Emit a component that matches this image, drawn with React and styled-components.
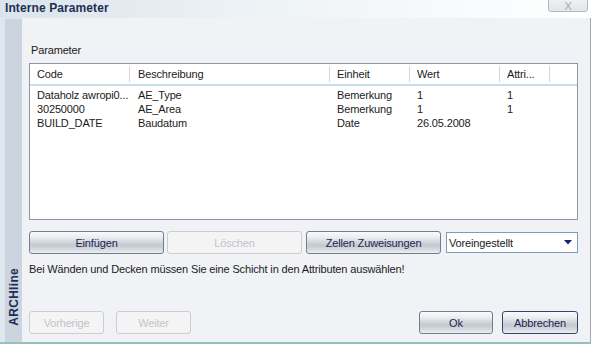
import styled, { createGlobalStyle } from 'styled-components';

const GlobalStyle = createGlobalStyle`
    html, body {
        margin: 0;
        padding: 0;
        background: #ffffff;
    }
    body {
        font-family: "Liberation Sans", Arial, sans-serif;
        font-size: 11px;
        letter-spacing: -0.15px;
        color: #1b1b1b;
    }
`

const Window = styled.div`
    width: 591px;
    height: 344px;
    display: flex;
    flex-direction: column;
    border-bottom: 2px solid #93c3b6;
    box-sizing: border-box;
`

const TitleBar = styled.div`
    height: 18px;
    flex-shrink: 0;
    display: flex;
    justify-content: space-between;
    align-items: flex-start;
    background: linear-gradient(to right, #dae4eb 0%, #eef3f6 45%, #ffffff 100%);
    padding-left: 5px;
`

const Title = styled.div`
    font-weight: bold;
    font-size: 12px;
    line-height: 17px;
    color: #1e2f55;
    letter-spacing: 0.1px;
`

const CloseButton = styled.div`
    width: 38px;
    height: 18px;
    margin-top: -8px;
    margin-right: 3px;
    border: 1px solid #b3b9c2;
    border-radius: 3px;
    background: linear-gradient(to bottom, #f4f5f7, #e3e6ea);
    color: #a4aab2;
    font-size: 11px;
    line-height: 26px;
    text-align: center;
    overflow: hidden;
`

const Body = styled.div`
    flex: 1;
    display: flex;
    background: #dde7ed;
    border-right: 1px solid #a4a9b0;
`

const Strip = styled.div`
    width: 17px;
    flex-shrink: 0;
    margin-left: 5px;
    margin-top: 1px;
    background: #ccd4df;
    display: flex;
    flex-direction: column;
    justify-content: flex-end;
    align-items: center;
    padding-bottom: 16px;
    box-sizing: border-box;
`

const BrandText = styled.div`
    writing-mode: vertical-rl;
    transform: rotate(180deg);
    font-weight: bold;
    font-size: 12px;
    color: #1e2f55;
    letter-spacing: 0.3px;
`

const Content = styled.div`
    flex: 1;
    min-width: 0;
    background: #f1f2f6;
    padding: 25px 12px 0 7px;
    display: flex;
    flex-direction: column;
`

const Label = styled.div`
    line-height: 14px;
    padding-left: 2px;
    margin-bottom: 6px;
`

const ListView = styled.div`
    height: 157px;
    box-sizing: border-box;
    border: 1px solid #8c96a4;
    background: #ffffff;
`

const HeaderRow = styled.div`
    display: grid;
    grid-template-columns: 100px 200px 80px 90px 50px 1fr;
    height: 20px;
    border-bottom: 2px solid #c9dcea;
`

const HeaderCell = styled.div`
    padding-left: ${p => p.$pad || 7}px;
    border-right: ${p => p.$last ? 'none' : '1px solid #d6d6d6'};
    margin: 2px 0;
    line-height: 16px;
    white-space: nowrap;
    overflow: hidden;
`

const Rows = styled.div`
    padding-top: 2px;
`

const Row = styled.div`
    display: grid;
    grid-template-columns: 100px 200px 80px 90px 50px 1fr;
    height: 14px;
    line-height: 14px;
`

const Cell = styled.div`
    padding-left: ${p => p.$pad || 7}px;
    white-space: nowrap;
    overflow: hidden;
`

const ButtonRow = styled.div`
    display: flex;
    align-items: center;
    margin-top: 11px;
    gap: 3px;
`

const Button = styled.div`
    width: ${p => p.$w}px;
    height: 23px;
    flex-shrink: 0;
    box-sizing: border-box;
    border: 1px solid ${p => p.$disabled ? '#cacdd2' : p.$strong ? '#33456a' : '#727d8d'};
    border-radius: 3px;
    background: ${p => p.$disabled
        ? '#f4f4f4'
        : 'linear-gradient(to bottom, #fbfbfc 0%, #eceef1 25%, #c3c9d1 62%, #d7dbe1 85%, #eef0f3 100%)'};
    color: ${p => p.$disabled ? '#c2c4c8' : '#1e2550'};
    display: flex;
    align-items: center;
    justify-content: center;
    font-size: 11px;
    margin-left: ${p => p.$ml || 0}px;
`

const Select = styled.div`
    width: 135px;
    height: 21px;
    box-sizing: border-box;
    margin-left: 2px;
    border: 1px solid #7f9db9;
    background: #ffffff;
    display: flex;
    align-items: center;
    justify-content: space-between;
    padding: 0 5px 0 2px;
`

const Message = styled.div`
    margin-top: 8px;
    line-height: 14px;
`

const FooterRow = styled.div`
    display: flex;
    align-items: center;
    margin-top: 35px;
`

const Spacer = styled.div`
    flex: 1;
`

const columns = [
    { key: 'code', label: 'Code', pad: 7 },
    { key: 'desc', label: 'Beschreibung', pad: 8 },
    { key: 'unit', label: 'Einheit', pad: 7 },
    { key: 'value', label: 'Wert', pad: 7 },
    { key: 'attr', label: 'Attri...', pad: 7 },
]

const rows = [
    { code: 'Dataholz awropi0...', desc: 'AE_Type', unit: 'Bemerkung', value: '1', attr: '1' },
    { code: '30250000', desc: 'AE_Area', unit: 'Bemerkung', value: '1', attr: '1' },
    { code: 'BUILD_DATE', desc: 'Baudatum', unit: 'Date', value: '26.05.2008', attr: '' },
]

const App = () => {
    return (
        <>
            <GlobalStyle />
            <Window>
                <TitleBar>
                    <Title>Interne Parameter</Title>
                    <CloseButton>X</CloseButton>
                </TitleBar>
                <Body>
                    <Strip>
                        <BrandText>ARCHline</BrandText>
                    </Strip>
                    <Content>
                        <Label>Parameter</Label>
                        <ListView>
                            <HeaderRow>
                                {columns.map(c => (
                                    <HeaderCell key={c.key} $pad={c.pad}>{c.label}</HeaderCell>
                                ))}
                                <HeaderCell $last />
                            </HeaderRow>
                            <Rows>
                                {rows.map((r, i) => (
                                    <Row key={i}>
                                        {columns.map(c => (
                                            <Cell key={c.key} $pad={c.pad}>{r[c.key]}</Cell>
                                        ))}
                                        <Cell />
                                    </Row>
                                ))}
                            </Rows>
                        </ListView>
                        <ButtonRow>
                            <Button $w={135}>Einfügen</Button>
                            <Button $w={135} $disabled>Löschen</Button>
                            <Button $w={135} $ml={1}>Zellen Zuweisungen</Button>
                            <Select>
                                <span>Voreingestellt</span>
                                <svg width="8" height="5" viewBox="0 0 8 5">
                                    <path d="M0 0 H8 L4 4.5 Z" fill="#16256a" />
                                </svg>
                            </Select>
                        </ButtonRow>
                        <Message>Bei Wänden und Decken müssen Sie eine Schicht in den Attributen auswählen!</Message>
                        <FooterRow>
                            <Button $w={75} $disabled>Vorherige</Button>
                            <Button $w={75} $disabled $ml={12}>Weiter</Button>
                            <Spacer />
                            <Button $w={74}>Ok</Button>
                            <Button $w={76} $ml={9} $strong>Abbrechen</Button>
                        </FooterRow>
                    </Content>
                </Body>
            </Window>
        </>
    )
}

export default App;
